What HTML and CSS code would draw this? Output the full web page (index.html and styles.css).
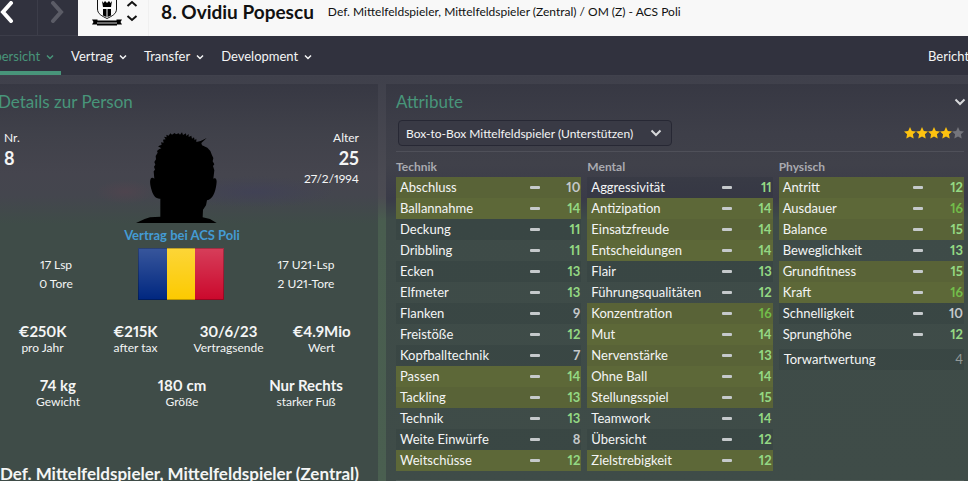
FILE: index.html
```html
<!DOCTYPE html>
<html lang="de">

<head>
    <title>Ovidiu Popescu</title>
    <meta charset="UTF-8">
    <meta name="viewport" content="width=device-width, initial-scale=1">
    <link rel="stylesheet" href="styles.css">
</head>

<body>
<!-- Kopfzeile -->
<header class="topbar">
    <button class="history" type="button" aria-label="Zurück">
        <svg width="14" height="22" viewBox="0 0 14 22"><path d="M11 2 3 11l8 9" /></svg>
    </button>
    <button class="history history-off" type="button" aria-label="Vor" disabled>
        <svg width="14" height="22" viewBox="0 0 14 22"><path d="m3 2 8 9-8 9" /></svg>
    </button>
    <div class="player">
        <svg class="crest" width="30" height="26" viewBox="0 0 30 26">
            <path class="crest-line" d="M5.500-2v11c0 5 4.500 7 9.500 9.500 5-2.500 9.500-4.500 9.500-9.500V-2z" />
            <path d="M10 1l1.500 2L13 1l2 2 2-2 1.500 2L20 1l-1 6h-8zM11 9h3.500v8L11 15.500zM15.500 9H19v6.500L15.500 17z" />
            <path d="M0 19.500h5.500v1h19v-1H30l-1.500 2.500 1.500 2.500h-5v1H5v-1H0L1.500 22z" />
            <path class="crest-band" d="M5 23h20" />
        </svg>
        <div class="stepper">
            <button type="button" aria-label="Vorheriger Spieler">
                <svg width="12" height="8" viewBox="0 0 12 8"><path d="m1.500 6 4.500-4 4.500 4" /></svg>
            </button>
            <button type="button" aria-label="Nächster Spieler">
                <svg width="12" height="8" viewBox="0 0 12 8"><path d="m1.500 2 4.500 4 4.500-4" /></svg>
            </button>
        </div>
        <h1>8. Ovidiu Popescu</h1>
        <p>Def. Mittelfeldspieler, Mittelfeldspieler (Zentral) / OM (Z) - ACS Poli</p>
    </div>
</header>

<!-- Navigation -->
<nav class="tabs">
    <a class="tab active" href="#">Übersicht <svg class="chev" viewBox="0 0 8 6"><path d="m1 1.500 3 3 3-3" /></svg></a>
    <a class="tab" href="#">Vertrag <svg class="chev" viewBox="0 0 8 6"><path d="m1 1.500 3 3 3-3" /></svg></a>
    <a class="tab" href="#">Transfer <svg class="chev" viewBox="0 0 8 6"><path d="m1 1.500 3 3 3-3" /></svg></a>
    <a class="tab" href="#">Development <svg class="chev" viewBox="0 0 8 6"><path d="m1 1.500 3 3 3-3" /></svg></a>
    <a class="tab tab-reports" href="#">Berichte</a>
</nav>

<main class="content">
    <!-- Details zur Person -->
    <section class="panel details">
        <h2>Details zur Person</h2>
        <div class="person">
            <div class="number">
                <span>Nr.</span>
                <strong>8</strong>
            </div>
            <svg class="portrait" width="92" height="95" viewBox="30 18 276 285">
                <path d="M30 303L56 291L72 286L103 284L103 230C90 231 82 222 77 205C72 188 70 174 76 168Q80 165 85 170L83 148L87 143L84 134L88 128L85 120L90 112L89 102L95 92L93 87L99 82L106 79L96 73L107 68L105 61L113 62L111 53L119 52L114 44L122 46L121 38L128 41L133 34L138 38L146 33L150 37L158 34L162 38L168 31L171 39L180 34L181 42L188 36L188 45L196 41L198 50L204 46L206 55L211 50L211 60L224 57L242 48L226 63L228 70L244 77L253 87L258 100L262 108L260 118L265 127L261 132L265 145L262 170C270 165 274 174 271 188C268 210 260 232 243 235L240 250L231 263L230 286L252 291L272 303z" />
            </svg>
            <div class="age">
                <span>Alter</span>
                <strong>25</strong>
                <span>27/2/1994</span>
            </div>
        </div>
        <a class="club" href="#">Vertrag bei ACS Poli</a>
        <div class="caps">
            <p>17 Lsp<br>0 Tore</p>
            <svg class="flag" width="86" height="52" viewBox="0 0 86 52">
                <defs>
                    <linearGradient id="shine" x1="0" y1="0" x2="0" y2="1">
                        <stop offset="0" stop-color="#fff" stop-opacity=".22" />
                        <stop offset="1" stop-color="#fff" stop-opacity="0" />
                    </linearGradient>
                </defs>
                <path fill="#002780" d="M0 0h29v52H0z" />
                <path fill="#fcca00" d="M29 0h28v52H29z" />
                <path fill="#cb082c" d="M57 0h29v52H57z" />
                <path fill="url(#shine)" d="M0 0h86v52H0z" />
                <path fill="none" stroke="#000" stroke-opacity=".25" d="M.5.5h85v51H.5z" />
            </svg>
            <p>17 U21-Lsp<br>2 U21-Tore</p>
        </div>
        <dl class="facts four">
            <div><dd>€250K</dd><dt>pro Jahr</dt></div>
            <div><dd>€215K</dd><dt>after tax</dt></div>
            <div><dd>30/6/23</dd><dt>Vertragsende</dt></div>
            <div><dd>€4.9Mio</dd><dt>Wert</dt></div>
        </dl>
        <dl class="facts three">
            <div><dd>74 kg</dd><dt>Gewicht</dt></div>
            <div><dd>180 cm</dd><dt>Größe</dt></div>
            <div><dd>Nur Rechts</dd><dt>starker Fuß</dt></div>
        </dl>
        <h3>Def. Mittelfeldspieler, Mittelfeldspieler (Zentral)</h3>
    </section>

    <!-- Attribute -->
    <section class="panel attributes">
        <div class="panel-head">
            <h2>Attribute</h2>
            <button class="collapse" type="button" aria-label="Attribute einklappen">
                <svg width="12" height="8" viewBox="0 0 12 8"><path d="m1.500 1.500 4.500 4.500 4.500-4.500" /></svg>
            </button>
        </div>
        <div class="role">
            <select class="role-select" aria-label="Rolle">
                <option>Box-to-Box Mittelfeldspieler (Unterstützen)</option>
            </select>
            <div class="stars" role="img" aria-label="4 von 5 Sternen">
                <svg class="star" viewBox="0 0 12 12"><path d="m6 0 1.800 3.900 4.200.5-3.100 2.900.8 4.300L6 9.500l-3.700 2.100.8-4.300L0 4.400l4.200-.5z" /></svg>
                <svg class="star" viewBox="0 0 12 12"><path d="m6 0 1.800 3.900 4.200.5-3.100 2.900.8 4.300L6 9.500l-3.700 2.100.8-4.300L0 4.400l4.200-.5z" /></svg>
                <svg class="star" viewBox="0 0 12 12"><path d="m6 0 1.800 3.900 4.200.5-3.100 2.900.8 4.300L6 9.500l-3.700 2.100.8-4.300L0 4.400l4.200-.5z" /></svg>
                <svg class="star" viewBox="0 0 12 12"><path d="m6 0 1.800 3.900 4.200.5-3.100 2.900.8 4.300L6 9.500l-3.700 2.100.8-4.300L0 4.400l4.200-.5z" /></svg>
                <svg class="star star-off" viewBox="0 0 12 12"><path d="m6 0 1.800 3.900 4.200.5-3.100 2.900.8 4.300L6 9.500l-3.700 2.100.8-4.300L0 4.400l4.200-.5z" /></svg>
            </div>
        </div>
        <div class="groups">
            <table>
                <colgroup><col><col class="col-trend"><col class="col-value"></colgroup>
                <thead><tr><th colspan="3">Technik</th></tr></thead>
                <tbody>
                <tr class="key"><td>Abschluss</td><td><i></i></td><td class="low">10</td></tr>
                <tr class="key"><td>Ballannahme</td><td><i></i></td><td>14</td></tr>
                <tr><td>Deckung</td><td><i></i></td><td>11</td></tr>
                <tr><td>Dribbling</td><td><i></i></td><td>11</td></tr>
                <tr><td>Ecken</td><td><i></i></td><td>13</td></tr>
                <tr><td>Elfmeter</td><td><i></i></td><td>13</td></tr>
                <tr><td>Flanken</td><td><i></i></td><td class="low">9</td></tr>
                <tr><td>Freistöße</td><td><i></i></td><td>12</td></tr>
                <tr><td>Kopfballtechnik</td><td><i></i></td><td class="low">7</td></tr>
                <tr class="key"><td>Passen</td><td><i></i></td><td>14</td></tr>
                <tr class="key"><td>Tackling</td><td><i></i></td><td>13</td></tr>
                <tr><td>Technik</td><td><i></i></td><td>13</td></tr>
                <tr><td>Weite Einwürfe</td><td><i></i></td><td class="low">8</td></tr>
                <tr class="key"><td>Weitschüsse</td><td><i></i></td><td>12</td></tr>
                </tbody>
            </table>
            <table>
                <colgroup><col><col class="col-trend"><col class="col-value"></colgroup>
                <thead><tr><th colspan="3">Mental</th></tr></thead>
                <tbody>
                <tr><td>Aggressivität</td><td><i></i></td><td>11</td></tr>
                <tr class="key"><td>Antizipation</td><td><i></i></td><td>14</td></tr>
                <tr class="key"><td>Einsatzfreude</td><td><i></i></td><td>14</td></tr>
                <tr class="key"><td>Entscheidungen</td><td><i></i></td><td>14</td></tr>
                <tr><td>Flair</td><td><i></i></td><td>13</td></tr>
                <tr><td>Führungsqualitäten</td><td><i></i></td><td>12</td></tr>
                <tr class="key"><td>Konzentration</td><td><i></i></td><td class="high">16</td></tr>
                <tr class="key"><td>Mut</td><td><i></i></td><td>14</td></tr>
                <tr class="key"><td>Nervenstärke</td><td><i></i></td><td>13</td></tr>
                <tr class="key"><td>Ohne Ball</td><td><i></i></td><td>14</td></tr>
                <tr class="key"><td>Stellungsspiel</td><td><i></i></td><td>15</td></tr>
                <tr><td>Teamwork</td><td><i></i></td><td>14</td></tr>
                <tr><td>Übersicht</td><td><i></i></td><td>12</td></tr>
                <tr class="key"><td>Zielstrebigkeit</td><td><i></i></td><td>12</td></tr>
                </tbody>
            </table>
            <div>
                <table>
                    <colgroup><col><col class="col-trend"><col class="col-value"></colgroup>
                    <thead><tr><th colspan="3">Physisch</th></tr></thead>
                    <tbody>
                    <tr class="key"><td>Antritt</td><td><i></i></td><td>12</td></tr>
                    <tr class="key"><td>Ausdauer</td><td><i></i></td><td class="high">16</td></tr>
                    <tr class="key"><td>Balance</td><td><i></i></td><td>15</td></tr>
                    <tr><td>Beweglichkeit</td><td><i></i></td><td>13</td></tr>
                    <tr class="key"><td>Grundfitness</td><td><i></i></td><td>15</td></tr>
                    <tr class="key"><td>Kraft</td><td><i></i></td><td class="high">16</td></tr>
                    <tr><td>Schnelligkeit</td><td><i></i></td><td class="low">10</td></tr>
                    <tr><td>Sprunghöhe</td><td><i></i></td><td>12</td></tr>
                    </tbody>
                </table>
                <p class="keeper"><span>Torwartwertung</span><span class="keeper-value">4</span></p>
            </div>
        </div>
    </section>
</main>
</body>

</html>
```
FILE: styles.css
```css
* {
    box-sizing: border-box;
}

body {
    margin: 0;
    height: 100vh;
    display: flex;
    flex-direction: column;
    overflow: hidden;
    background-color: #31323e;
    color: #f4f5f5;
    font-family: Lato, "Liberation Sans", sans-serif;
    font-size: 13px;
    font-variant-numeric: proportional-nums;
    line-height: 21px;
}

h1, h2, h3, p, dl, dd {
    margin: 0;
}

button {
    padding: 0;
    border: none;
    background: none;
    cursor: pointer;
}

a {
    text-decoration: none;
}

svg {
    display: block;
    flex: none;
}

/* Kopfzeile */
.topbar {
    display: flex;
    flex: none;
    height: 36px;
}

.history {
    display: flex;
    width: 38px;
    padding-bottom: 12px;
    align-items: center;
    border-right: 1px solid #3c3d49;
    border-bottom: 1px solid #3c3d49;
}

.history path {
    fill: none;
    stroke: #fff;
    stroke-width: 4;
    stroke-linecap: round;
}

.history-off {
    width: 40px;
    padding-left: 12px;
    border-right: none;
}

.history-off path {
    stroke: #5b5c66;
}

.player {
    display: flex;
    flex: 1;
    align-items: flex-start;
    padding-left: 14px;
    background-color: #f8f8f8;
    color: #111;
    white-space: nowrap;
}

.crest-line {
    fill: none;
    stroke: #111;
}

.crest-band {
    fill: none;
    stroke: #d0d0d0;
}

.stepper {
    display: flex;
    flex-direction: column;
    gap: 6px;
    height: 36px;
    width: 27px;
    padding: 0 0 0 4px;
    border-right: 1px solid #f0f0f0;
}

.stepper path {
    fill: none;
    stroke: #111;
    stroke-width: 2;
}

.player h1 {
    padding-left: 12px;
    font-size: 19px;
    line-height: 24px;
}

.player p {
    padding-left: 14px;
    font-size: 12px;
    line-height: 23px;
}

/* Navigation */
.tabs {
    display: flex;
    flex: none;
    height: 40px;
    margin-left: -15px;
    border-bottom: 1px solid #41424d;
    white-space: nowrap;
}

.tab {
    display: flex;
    align-items: center;
    gap: 6px;
    padding: 2px 7px 0 10px;
    color: #f4f5f5;
    font-size: 13px;
}

.tab.active {
    padding-top: 6px;
    padding-left: 0;
    color: #48957a;
    border-bottom: 4px solid #48957a;
}

.tab-reports {
    width: 50px;
    margin-left: auto;
}

.chev {
    width: 8px;
    height: 6px;
}

.chev path {
    fill: none;
    stroke: currentColor;
    stroke-width: 1.5;
}

/* Inhalt */
.content {
    display: grid;
    grid-template-columns: 378fr 582fr;
    gap: 8px;
    flex: 1;
    padding-top: 8px;
    background: linear-gradient(#3f404b 0, #4a4a52 100px, #4b4b52 120px, #495d4f 145px, #4a5f50 100%);
}

.panel {
    background: linear-gradient(#373843 0, #3e3f49 50px, #40414a 80px, #3a3b48 115px, #3e4b48 135px, #3f4c48 100%);
}

.panel h2 {
    color: #48957a;
    font-size: 17px;
    font-weight: 400;
    line-height: 36px;
}

.details {
    display: flex;
    flex-direction: column;
    background:
        radial-gradient(80px 16px at 255px 108px, rgba(60, 60, 95, 0.4), transparent),
        radial-gradient(30px 12px at 125px 108px, rgba(100, 65, 78, 0.3), transparent),
        linear-gradient(#373843 0, #40414a 50px, #45454e 90px, #44464e 112px, #3f4c48 140px, #3f4c48 100%);
    white-space: nowrap;
}

.details h2 {
    margin-left: -2px;
}

.person {
    display: grid;
    grid-template-columns: 1fr 92px 1fr;
    align-items: start;
    padding: 8px 19px 0 4px;
}

.number, .age {
    display: flex;
    flex-direction: column;
    font-size: 12px;
    line-height: 20px;
}

.age {
    align-items: flex-end;
}

.person strong {
    font-size: 18px;
    line-height: 21px;
}

.club {
    margin-left: -14px;
    color: #449bd4;
    font-weight: 700;
    line-height: 25px;
    text-align: center;
}

.caps {
    display: grid;
    grid-template-columns: 1fr 86px 1fr;
    gap: 26px;
    align-items: center;
    padding-right: 16px;
    font-size: 12px;
    line-height: 19px;
    text-align: center;
}

.facts {
    display: grid;
    margin-left: -4px;
    padding-right: 10px;
    text-align: center;
    font-size: 12px;
    line-height: 16px;
}

.facts dd {
    font-size: 15px;
    font-weight: 700;
    line-height: 18px;
}

.four {
    grid-template-columns: repeat(4, 1fr);
    padding-top: 22px;
}

.three {
    grid-template-columns: repeat(3, 1fr);
    padding-top: 20px;
}

.details h3 {
    margin-top: 52px;
    font-size: 17px;
    line-height: 24px;
}

/* Attribute */
.attributes {
    padding: 0 4px 0 10px;
}

.panel-head {
    display: flex;
    justify-content: space-between;
    align-items: center;
}

.collapse {
    margin-right: -2px;
}

.collapse path {
    fill: none;
    stroke: #d7d8da;
    stroke-width: 2;
}

.role {
    display: flex;
    justify-content: space-between;
    align-items: flex-start;
    height: 32px;
    padding-left: 2px;
    border-bottom: 1px solid #4f5059;
}

.role-select {
    width: 274px;
    height: 26px;
    padding: 0 7px;
    appearance: none;
    border: 1px solid #272834;
    border-radius: 4px;
    color: #f4f5f5;
    font-family: inherit;
    font-size: 12px;
    background: #393a45 url("data:image/svg+xml,%3Csvg xmlns='http://www.w3.org/2000/svg' width='12' height='8'%3E%3Cpath d='m1.500 1.500 4.500 4.500 4.500-4.500' fill='none' stroke='%23d7d8da' stroke-width='2'/%3E%3C/svg%3E") no-repeat right 9px center;
}

.stars {
    display: flex;
    padding-top: 7px;
}

.star {
    width: 12px;
    height: 12px;
    fill: #fdc210;
}

.star-off {
    fill: #74757c;
}

.groups {
    display: grid;
    grid-template-columns: repeat(3, 1fr);
    gap: 6px;
    align-items: start;
    padding: 5px 0 9px;
    border-bottom: 1px solid #4f5b57;
}

table {
    width: 100%;
    table-layout: fixed;
    border-collapse: collapse;
}

.col-trend {
    width: 20px;
}

.col-value {
    width: 31px;
}

th {
    padding: 0;
    color: #a9aab0;
    font-size: 12px;
    line-height: 20px;
    text-align: left;
}

td {
    height: 21px;
    padding: 0;
    line-height: 21px;
    white-space: nowrap;
}

tbody tr:nth-child(odd) {
    background-color: rgba(20, 30, 40, 0.1);
}

tbody tr.key {
    background-color: #5d6838;
}

tbody tr.key:nth-child(odd) {
    background-color: #596337;
}

td:first-child {
    padding-left: 4px;
}

td:nth-child(3) {
    padding-right: 1px;
    color: #94d883;
    font-weight: 700;
    text-align: right;
}

td.low:nth-child(3) {
    color: #c5c9cb;
}

td.high:nth-child(3) {
    color: #72bd4a;
}

td i {
    display: block;
    width: 10px;
    height: 3px;
    border-radius: 1px;
    background-color: #c5c9cb;
}

.keeper {
    display: flex;
    justify-content: space-between;
    margin-top: 4px;
    padding: 0 1px 0 5px;
    background-color: rgba(20, 30, 40, 0.1);
}

.keeper-value {
    color: #929a99;
}
```
